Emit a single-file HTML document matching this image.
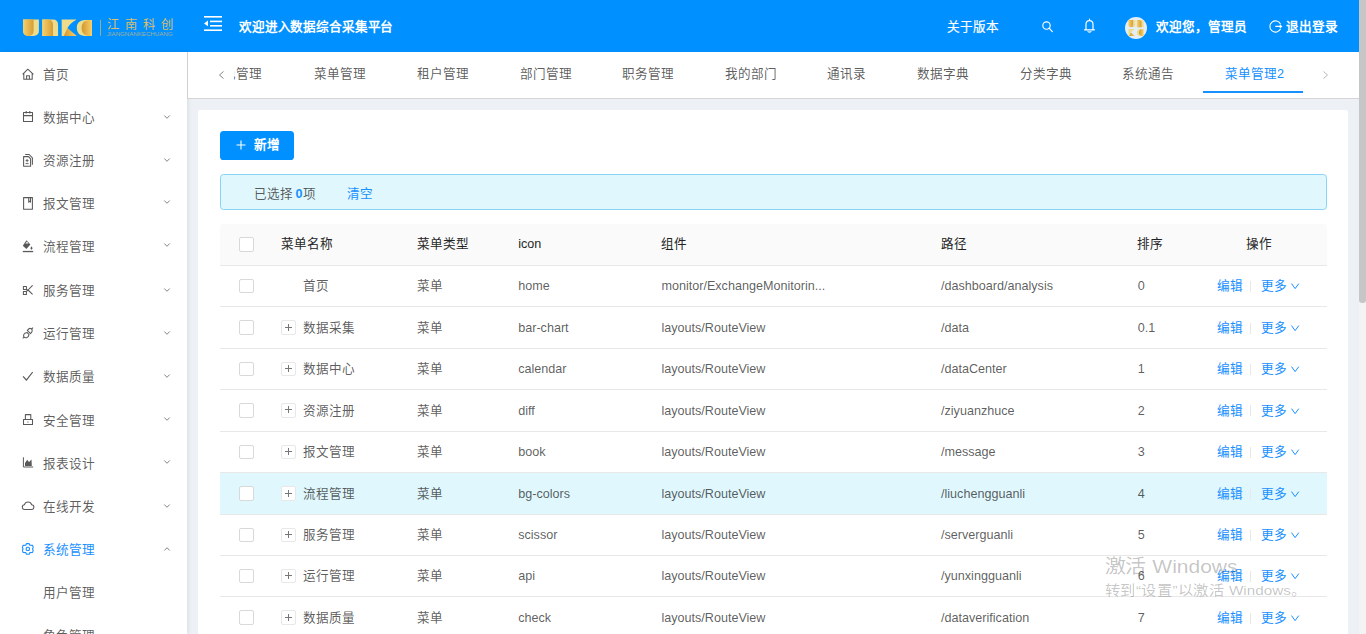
<!DOCTYPE html>
<html lang="zh-CN"><head><meta charset="utf-8">
<style>
*{box-sizing:border-box;margin:0;padding:0}
html,body{width:1366px;height:634px;overflow:hidden}
body{font-family:"Liberation Sans",sans-serif;font-size:12.6px;color:rgba(0,0,0,.65);background:#edf0f4;position:relative}
.abs{position:absolute}
#sb{left:1359px;top:0;width:7px;height:634px;background:#f3f3f3}
#thumb{left:0;top:0;width:7px;height:303px;background:#c6c6c6;border-radius:0 0 3px 3px}
#hdr{left:0;top:0;width:1359px;height:52px;background:#0090ff;color:#fff}
#side{left:0;top:52px;width:187px;height:582px;background:#fff;box-shadow:1px 0 4px rgba(0,21,41,.09)}
#tabs{left:187px;top:52px;width:1172px;height:47px;background:#fff;border-left:1px solid #cfcfcf;border-bottom:1px solid #d4d4d4}
#card{left:198px;top:110px;width:1150px;height:530px;background:#fff;border-radius:2px}
.t{position:absolute;white-space:nowrap;line-height:1}
.hw{color:#fff;font-size:12.6px}
svg{position:absolute;overflow:visible}
</style></head>
<body>
<div id="hdr" class="abs">
  <!-- logo -->
  <svg style="left:0;top:0" width="190" height="52" viewBox="0 0 190 52">
    <defs>
      <linearGradient id="gd" x1="0" x2="1" y1="0" y2="0">
        <stop offset="0" stop-color="#f6d16c"/><stop offset="1" stop-color="#d69c36"/>
      </linearGradient>
      <linearGradient id="gr" x1="0" x2="1" y1="0" y2="0">
        <stop offset="0" stop-color="#d3962e"/><stop offset="1" stop-color="#f7d06a"/>
      </linearGradient>
    </defs>
    <g id="lU">
    <path d="M23.1,19.5 H38.9 V30.8 Q38.9,35.9 33.5,35.9 H28.5 Q23.1,35.9 23.1,30.8 Z" fill="#ecdc8c"/>
    <path d="M23.1,19.5 H33.6 V30.8 Q33.6,35.9 28.3,35.9 Q23.1,35.9 23.1,30.8 Z" fill="url(#gd)"/>
    </g><g id="ln">
    <path d="M42.3,35.9 V19.5 H53 Q58.1,19.5 58.1,25 V35.9 Z" fill="#ecdc8c"/>
    <path d="M42.3,35.9 V19.5 H48 Q53,19.5 53,25 V35.9 Z" fill="url(#gd)"/>
    </g><g id="lK">
    <path d="M61.7,19.5 H76.8 Q70.5,22.5 67.4,28 L68.5,29 L65.5,35.9 H61.7 Z" fill="#ecdc8c"/>
    <path d="M63.8,35.9 L67.4,28 L76.8,35.9 Z" fill="url(#gr)"/>
    </g><g id="lC">
    <path d="M92,20 H84.5 Q76.8,20.5 76.8,27.9 Q76.8,35.4 84.5,35.9 H92 Z" fill="#ecdc8c"/>
    <path d="M92,20.2 H88 Q81.6,21 81.6,28 Q81.6,35 88,35.9 H92 Z" fill="url(#gr)"/>
    </g>
    <rect x="100" y="19.7" width="0.9" height="16" fill="#d9b760" opacity=".8"/>
  </svg>
  <svg style="left:0;top:0" width="190" height="52" viewBox="0 0 190 52">
    <text x="106.5" y="29.4" font-size="12.3" textLength="66" lengthAdjust="spacing" fill="#d9bf70" font-family="Liberation Sans, sans-serif">江南科创</text>
    <text x="106.8" y="36.2" font-size="4.9" textLength="65.6" lengthAdjust="spacingAndGlyphs" fill="#cdb877" opacity=".8" font-family="Liberation Sans, sans-serif">JIANGNANKECHUANG</text>
  </svg>
  <!-- menu fold icon -->
  <svg style="left:204px;top:15.5px" width="18" height="15" viewBox="0 0 18 15">
    <rect x="0" y="0" width="18" height="1.6" fill="#fff"/>
    <rect x="6" y="4.6" width="12" height="1.6" fill="#fff"/>
    <rect x="6" y="9" width="12" height="1.6" fill="#fff"/>
    <rect x="0" y="13.4" width="18" height="1.6" fill="#fff"/>
    <path d="M0,7.4 L4,4.6 V10.2 Z" fill="#fff"/>
  </svg>
  <div class="t hw" style="left:239px;top:20.5px;font-size:12.6px;font-weight:600;letter-spacing:-0.15px">欢迎进入数据综合采集平台</div>
  <div class="t hw" style="left:947px;top:20.5px;-webkit-text-stroke:0.2px #fff">关于版本</div>
  <!-- search -->
  <svg style="left:1041.5px;top:20.5px" width="12" height="12" viewBox="0 0 12 12">
    <circle cx="4.5" cy="4.5" r="3.7" fill="none" stroke="#fff" stroke-width="1.15"/>
    <path d="M7.2,7.2 L10.3,10.6" stroke="#fff" stroke-width="1.2" stroke-linecap="round"/>
  </svg>
  <!-- bell -->
  <svg style="left:1083.5px;top:18px" width="11" height="15" viewBox="0 0 11 15">
    <path d="M5.5,1.2 V2.2 M2,11.5 V6.5 Q2,2.6 5.5,2.6 Q9,2.6 9,6.5 V11.5 M0.5,11.8 H10.5 M4,13.6 Q5.5,14.8 7,13.6" fill="none" stroke="#fff" stroke-width="1.2" stroke-linecap="round"/>
  </svg>
  <!-- avatar -->
  <div class="abs" style="left:1125px;top:17px;width:21.8px;height:21.8px;border-radius:50%;background:#e3eef8;overflow:hidden">
    <svg style="left:0;top:0" width="22" height="22" viewBox="0 0 22 22">
      <use href="#lU" transform="translate(3.5,3.1) scale(.43) translate(-23.1,-19.5)"/>
      <use href="#ln" transform="translate(11.9,3.1) scale(.43) translate(-42.3,-19.5)"/>
      <use href="#lK" transform="translate(3.5,11.9) scale(.43) translate(-61.7,-19.5)"/>
      <use href="#lC" transform="translate(11.9,11.9) scale(.43) translate(-76.8,-19.5)"/>
    </svg>
  </div>
  <div class="t hw" style="left:1155.5px;top:20.5px;font-weight:600">欢迎您，管理员</div>
  <!-- logout -->
  <svg style="left:1269px;top:20px" width="13" height="13" viewBox="0 0 13 13">
    <path d="M11.6,4.2 A5.6,5.6 0 1 0 11.6,8.8" fill="none" stroke="#fff" stroke-width="1.1"/>
    <path d="M6.3,6.4 H12.6 M10.8,4.9 L12.6,6.4 L10.8,7.9" fill="none" stroke="#fff" stroke-width="1.1"/>
  </svg>
  <div class="t hw" style="left:1285.5px;top:20.5px;font-weight:600">退出登录</div>
</div>

<div id="side" class="abs"></div>
<svg style="left:0;top:0" width="187" height="634" viewBox="0 0 187 634">
<g fill="none" stroke="#595959" stroke-width="1.05" stroke-linejoin="round">
<path d="M22.6,74.4 L27.8,69.2 L33.4,74.4 M23.8,73.4 V79.2 H32.2 V73.4 M26.6,79.2 V75.8 H29.4 V79.2"/>
<path d="M23.5,112.5 H32.5 V121.5 H23.5 Z M23.5,115.6 H32.5 M26.2,111 V113.6 M29.8,111 V113.6"/>
<path d="M23.6,156.6 H28.6 L30.6,158.8 V166.3 H23.6 Z M25.2,154.5 H29.2 L32.4,157.8 V164.8"/>
<path d="M25.6,160.6 H28.6 M27.1,159 V162.2 M25.6,163.6 H28.6" stroke-width="0.9"/>
<path d="M23.6,197.6 H32.4 V209.3 H23.6 Z M28.7,197.6 V202.2 L29.6,201.2 L30.5,202.2 V197.6"/>
<path d="M23.5,286.5 m-0.1,0 h3 v3 h-3 Z M23.4,291.5 h3 v3 h-3 Z M26.4,289.5 L28,290 L32.6,285.3 M26.4,291.4 L28,290 L32.6,294.4"/>
<path d="M27.3,330.4 L30.5,333.6 Q32.6,331.6 32.2,329.9 Q31.2,327.9 29.3,328.5 Z M31.8,328.9 L33,327.7"/>
<path d="M27.2,332.6 L29,334.6 Q28.6,337.2 26.6,337.7 Q24.6,338 23.7,336.6 Q23,334.8 24.8,333.3 Z M23.9,337.2 L22.8,338.3"/>
<path d="M23.1,376.3 L26.4,380.2 L32.7,372" stroke-width="1.2"/>
<path d="M23.5,419.5 H32.5 V424.5 H23.5 Z M25.4,419.5 V414.6 H30.8 V419.5 M27.9,421.4 V422.6"/>
<path d="M23.4,457.3 V467 H33.2" stroke-width="1"/>
<path d="M24.6,509.5 Q22.3,509.5 22.3,507.2 Q22.3,505 24.4,504.8 Q25.3,502 28,502 Q30.9,502 31.7,504.8 Q33.9,505 33.9,507.2 Q33.9,509.5 31.5,509.5 Z"/>
</g>
<path d="M26.5,240.2 L30.4,244.6 L26.4,248.9 L22.8,245.8 Z" fill="#595959"/>
<path d="M25.4,243.6 L27,241.6 L28.5,243.6 Z" fill="#fff"/>
<path d="M31.5,246.2 Q32.8,248 32.4,249 Q31.5,250 30.6,249 Q30.2,248 31.5,246.2 Z" fill="#595959"/>
<rect x="22.8" y="250.9" width="10.4" height="1.3" fill="#595959"/>
<path d="M25,466 V463 L27.2,459.8 L29,462 L31.5,459.4 L31.8,466 Z" fill="#595959"/>
<g fill="none" stroke="#1890ff" stroke-width="1.1" stroke-linejoin="round">
<path d="M26.4,543.6 H29.2 L29.8,545.2 L32.6,545.4 L33.2,547.6 L32.5,548.9 L33.2,550.2 L32.6,552.4 L29.8,552.6 L29.2,554.2 H26.4 L25.8,552.6 L23,552.4 L22.4,550.2 L23.1,548.9 L22.4,547.6 L23,545.4 L25.8,545.2 Z"/>
<rect x="26.2" y="547.2" width="3.2" height="3.3" rx="1"/>
</g>
</svg>
<div class="t" style="left:43.4px;top:69.0px;color:rgba(0,0,0,.65)">首页</div>
<div class="t" style="left:43.4px;top:112.2px;color:rgba(0,0,0,.65)">数据中心</div>
<svg style="left:163.7px;top:114.7px" width="6" height="4" viewBox="0 0 6 4"><path d="M0.3,0.5 L3,3.3 L5.7,0.5" fill="none" stroke="#777" stroke-width="0.9"/></svg>
<div class="t" style="left:43.4px;top:155.4px;color:rgba(0,0,0,.65)">资源注册</div>
<svg style="left:163.7px;top:157.9px" width="6" height="4" viewBox="0 0 6 4"><path d="M0.3,0.5 L3,3.3 L5.7,0.5" fill="none" stroke="#777" stroke-width="0.9"/></svg>
<div class="t" style="left:43.4px;top:197.6px;color:rgba(0,0,0,.65)">报文管理</div>
<svg style="left:163.7px;top:200.1px" width="6" height="4" viewBox="0 0 6 4"><path d="M0.3,0.5 L3,3.3 L5.7,0.5" fill="none" stroke="#777" stroke-width="0.9"/></svg>
<div class="t" style="left:43.4px;top:240.8px;color:rgba(0,0,0,.65)">流程管理</div>
<svg style="left:163.7px;top:243.3px" width="6" height="4" viewBox="0 0 6 4"><path d="M0.3,0.5 L3,3.3 L5.7,0.5" fill="none" stroke="#777" stroke-width="0.9"/></svg>
<div class="t" style="left:43.4px;top:285.0px;color:rgba(0,0,0,.65)">服务管理</div>
<svg style="left:163.7px;top:287.5px" width="6" height="4" viewBox="0 0 6 4"><path d="M0.3,0.5 L3,3.3 L5.7,0.5" fill="none" stroke="#777" stroke-width="0.9"/></svg>
<div class="t" style="left:43.4px;top:328.2px;color:rgba(0,0,0,.65)">运行管理</div>
<svg style="left:163.7px;top:330.7px" width="6" height="4" viewBox="0 0 6 4"><path d="M0.3,0.5 L3,3.3 L5.7,0.5" fill="none" stroke="#777" stroke-width="0.9"/></svg>
<div class="t" style="left:43.4px;top:371.4px;color:rgba(0,0,0,.65)">数据质量</div>
<svg style="left:163.7px;top:373.9px" width="6" height="4" viewBox="0 0 6 4"><path d="M0.3,0.5 L3,3.3 L5.7,0.5" fill="none" stroke="#777" stroke-width="0.9"/></svg>
<div class="t" style="left:43.4px;top:414.6px;color:rgba(0,0,0,.65)">安全管理</div>
<svg style="left:163.7px;top:417.1px" width="6" height="4" viewBox="0 0 6 4"><path d="M0.3,0.5 L3,3.3 L5.7,0.5" fill="none" stroke="#777" stroke-width="0.9"/></svg>
<div class="t" style="left:43.4px;top:457.8px;color:rgba(0,0,0,.65)">报表设计</div>
<svg style="left:163.7px;top:460.3px" width="6" height="4" viewBox="0 0 6 4"><path d="M0.3,0.5 L3,3.3 L5.7,0.5" fill="none" stroke="#777" stroke-width="0.9"/></svg>
<div class="t" style="left:43.4px;top:501.0px;color:rgba(0,0,0,.65)">在线开发</div>
<svg style="left:163.7px;top:503.5px" width="6" height="4" viewBox="0 0 6 4"><path d="M0.3,0.5 L3,3.3 L5.7,0.5" fill="none" stroke="#777" stroke-width="0.9"/></svg>
<div class="t" style="left:43.4px;top:544.2px;color:#1890ff">系统管理</div>
<svg style="left:163.7px;top:546.7px" width="6" height="4" viewBox="0 0 6 4"><path d="M0.3,3.5 L3,0.7 L5.7,3.5" fill="none" stroke="#777" stroke-width="0.9"/></svg>
<div class="t" style="left:43.4px;top:587.4px">用户管理</div>
<div class="t" style="left:43.4px;top:629.6px">角色管理</div>
<div id="tabs" class="abs"></div>
<svg style="left:218px;top:70.5px" width="7" height="8" viewBox="0 0 7 8"><path d="M5.5,0.5 L1.5,4 L5.5,7.5" fill="none" stroke="#888" stroke-width="1"/></svg>
<div class="abs" style="left:234px;top:52px;width:960px;height:46px;overflow:hidden">
<div class="t" style="left:-10.8px;top:15.5px">色管理</div>
</div>
<div class="t" style="left:314px;top:67.5px">菜单管理</div>
<div class="t" style="left:417px;top:67.5px">租户管理</div>
<div class="t" style="left:520px;top:67.5px">部门管理</div>
<div class="t" style="left:622px;top:67.5px">职务管理</div>
<div class="t" style="left:725px;top:67.5px">我的部门</div>
<div class="t" style="left:827px;top:67.5px">通讯录</div>
<div class="t" style="left:917px;top:67.5px">数据字典</div>
<div class="t" style="left:1020px;top:67.5px">分类字典</div>
<div class="t" style="left:1122px;top:67.5px">系统通告</div>
<div class="t" style="left:1225px;top:67.5px;color:#1890ff">菜单管理2</div>
<div class="abs" style="left:1203px;top:90.5px;width:100px;height:2px;background:#1890ff"></div>
<svg style="left:1322px;top:70.5px" width="7" height="8" viewBox="0 0 7 8"><path d="M1.5,0.5 L5.5,4 L1.5,7.5" fill="none" stroke="#bbb" stroke-width="1"/></svg>
<div id="card" class="abs"></div>
<div class="abs" style="left:220px;top:131px;width:74px;height:29px;background:#0090ff;border-radius:3.6px"></div>
<svg style="left:236px;top:140px" width="10" height="10" viewBox="0 0 10 10"><path d="M0.5,5 H9.5 M5,0.5 V9.5" stroke="#fff" stroke-width="1.1"/></svg>
<div class="t" style="left:253.6px;top:139px;color:#fff;font-weight:600">新增</div>
<div class="abs" style="left:220px;top:174px;width:1107px;height:36px;background:#e0f7fd;border:1px solid #88d4f6;border-radius:3.6px"></div>
<div class="t" style="left:254.4px;top:187.5px">已选择 <span style="color:#1890ff;margin-left:-1.4px;font-weight:600">0</span>项</div>
<div class="t" style="left:347px;top:187.5px;color:#1890ff">清空</div>
<div class="abs" style="left:220px;top:224px;width:1107px;height:42px;background:#fafafa;border-bottom:1px solid #e8e8e8;border-radius:3.6px 3.6px 0 0"></div>
<div class="abs" style="left:239.4px;top:237.2px;width:14.4px;height:14.4px;border:1px solid #d9d9d9;border-radius:2px;background:#fff"></div>
<div class="t" style="left:280.8px;top:238.2px;color:rgba(0,0,0,.85);font-weight:500;-webkit-text-stroke:0.15px rgba(0,0,0,.5)">菜单名称</div>
<div class="t" style="left:416.5px;top:238.2px;color:rgba(0,0,0,.85);font-weight:500;-webkit-text-stroke:0.15px rgba(0,0,0,.5)">菜单类型</div>
<div class="t" style="left:518.2px;top:238.2px;color:rgba(0,0,0,.85);font-weight:500;-webkit-text-stroke:0.15px rgba(0,0,0,.5)">icon</div>
<div class="t" style="left:661.4px;top:238.2px;color:rgba(0,0,0,.85);font-weight:500;-webkit-text-stroke:0.15px rgba(0,0,0,.5)">组件</div>
<div class="t" style="left:941px;top:238.2px;color:rgba(0,0,0,.85);font-weight:500;-webkit-text-stroke:0.15px rgba(0,0,0,.5)">路径</div>
<div class="t" style="left:1137.4px;top:238.2px;color:rgba(0,0,0,.85);font-weight:500;-webkit-text-stroke:0.15px rgba(0,0,0,.5)">排序</div>
<div class="t" style="left:1246.4px;top:238.2px;color:rgba(0,0,0,.85);font-weight:500;-webkit-text-stroke:0.15px rgba(0,0,0,.5)">操作</div>
<div class="abs" style="left:220px;top:266px;width:1107px;height:40px;background:#fff"></div>
<div class="abs" style="left:220px;top:306px;width:1107px;height:1px;background:#e8e8e8"></div>
<div class="abs" style="left:239.4px;top:278.8px;width:14.4px;height:14.4px;border:1px solid #d9d9d9;border-radius:2px;background:#fff"></div>
<div class="t" style="left:303px;top:280.4px">首页</div>
<div class="t" style="left:416.5px;top:280.4px">菜单</div>
<div class="t" style="left:518.2px;top:280.4px">home</div>
<div class="t" style="left:661.4px;top:280.4px">monitor/ExchangeMonitorin...</div>
<div class="t" style="left:941px;top:280.4px">/dashboard/analysis</div>
<div class="t" style="left:1137.7px;top:280.4px">0</div>
<div class="t" style="left:1217.2px;top:280.4px;color:#1890ff">编辑</div>
<div class="abs" style="left:1250px;top:281px;width:1px;height:11px;background:#e8e8e8"></div>
<div class="t" style="left:1260.5px;top:280.4px;color:#1890ff">更多</div>
<svg style="left:1291.3px;top:283.4px" width="9" height="7" viewBox="0 0 9 7"><path d="M0.5,0.6 L4.1,5.6 L7.8,0.6" fill="none" stroke="#1890ff" stroke-width="1"/></svg>
<div class="abs" style="left:220px;top:307px;width:1107px;height:41px;background:#fff"></div>
<div class="abs" style="left:220px;top:348px;width:1107px;height:1px;background:#e8e8e8"></div>
<div class="abs" style="left:239.4px;top:320.3px;width:14.4px;height:14.4px;border:1px solid #d9d9d9;border-radius:2px;background:#fff"></div>
<div class="abs" style="left:281.2px;top:320.3px;width:14.4px;height:14.4px;border:1px solid #e8e8e8;border-radius:2px;background:#fff"></div>
<div class="abs" style="left:285px;top:327px;width:7px;height:1px;background:#777"></div>
<div class="abs" style="left:288px;top:324px;width:1px;height:7px;background:#777"></div>
<div class="t" style="left:303px;top:321.9px">数据采集</div>
<div class="t" style="left:416.5px;top:321.9px">菜单</div>
<div class="t" style="left:518.2px;top:321.9px">bar-chart</div>
<div class="t" style="left:661.4px;top:321.9px">layouts/RouteView</div>
<div class="t" style="left:941px;top:321.9px">/data</div>
<div class="t" style="left:1137.7px;top:321.9px">0.1</div>
<div class="t" style="left:1217.2px;top:321.9px;color:#1890ff">编辑</div>
<div class="abs" style="left:1250px;top:323px;width:1px;height:11px;background:#e8e8e8"></div>
<div class="t" style="left:1260.5px;top:321.9px;color:#1890ff">更多</div>
<svg style="left:1291.3px;top:324.9px" width="9" height="7" viewBox="0 0 9 7"><path d="M0.5,0.6 L4.1,5.6 L7.8,0.6" fill="none" stroke="#1890ff" stroke-width="1"/></svg>
<div class="abs" style="left:220px;top:349px;width:1107px;height:40px;background:#fff"></div>
<div class="abs" style="left:220px;top:389px;width:1107px;height:1px;background:#e8e8e8"></div>
<div class="abs" style="left:239.4px;top:361.8px;width:14.4px;height:14.4px;border:1px solid #d9d9d9;border-radius:2px;background:#fff"></div>
<div class="abs" style="left:281.2px;top:361.8px;width:14.4px;height:14.4px;border:1px solid #e8e8e8;border-radius:2px;background:#fff"></div>
<div class="abs" style="left:285px;top:368px;width:7px;height:1px;background:#777"></div>
<div class="abs" style="left:288px;top:365px;width:1px;height:7px;background:#777"></div>
<div class="t" style="left:303px;top:363.4px">数据中心</div>
<div class="t" style="left:416.5px;top:363.4px">菜单</div>
<div class="t" style="left:518.2px;top:363.4px">calendar</div>
<div class="t" style="left:661.4px;top:363.4px">layouts/RouteView</div>
<div class="t" style="left:941px;top:363.4px">/dataCenter</div>
<div class="t" style="left:1137.7px;top:363.4px">1</div>
<div class="t" style="left:1217.2px;top:363.4px;color:#1890ff">编辑</div>
<div class="abs" style="left:1250px;top:364px;width:1px;height:11px;background:#e8e8e8"></div>
<div class="t" style="left:1260.5px;top:363.4px;color:#1890ff">更多</div>
<svg style="left:1291.3px;top:366.4px" width="9" height="7" viewBox="0 0 9 7"><path d="M0.5,0.6 L4.1,5.6 L7.8,0.6" fill="none" stroke="#1890ff" stroke-width="1"/></svg>
<div class="abs" style="left:220px;top:390px;width:1107px;height:41px;background:#fff"></div>
<div class="abs" style="left:220px;top:431px;width:1107px;height:1px;background:#e8e8e8"></div>
<div class="abs" style="left:239.4px;top:403.3px;width:14.4px;height:14.4px;border:1px solid #d9d9d9;border-radius:2px;background:#fff"></div>
<div class="abs" style="left:281.2px;top:403.3px;width:14.4px;height:14.4px;border:1px solid #e8e8e8;border-radius:2px;background:#fff"></div>
<div class="abs" style="left:285px;top:409px;width:7px;height:1px;background:#777"></div>
<div class="abs" style="left:288px;top:406px;width:1px;height:7px;background:#777"></div>
<div class="t" style="left:303px;top:404.9px">资源注册</div>
<div class="t" style="left:416.5px;top:404.9px">菜单</div>
<div class="t" style="left:518.2px;top:404.9px">diff</div>
<div class="t" style="left:661.4px;top:404.9px">layouts/RouteView</div>
<div class="t" style="left:941px;top:404.9px">/ziyuanzhuce</div>
<div class="t" style="left:1137.7px;top:404.9px">2</div>
<div class="t" style="left:1217.2px;top:404.9px;color:#1890ff">编辑</div>
<div class="abs" style="left:1250px;top:405px;width:1px;height:11px;background:#e8e8e8"></div>
<div class="t" style="left:1260.5px;top:404.9px;color:#1890ff">更多</div>
<svg style="left:1291.3px;top:407.9px" width="9" height="7" viewBox="0 0 9 7"><path d="M0.5,0.6 L4.1,5.6 L7.8,0.6" fill="none" stroke="#1890ff" stroke-width="1"/></svg>
<div class="abs" style="left:220px;top:432px;width:1107px;height:40px;background:#fff"></div>
<div class="abs" style="left:220px;top:472px;width:1107px;height:1px;background:#e8e8e8"></div>
<div class="abs" style="left:239.4px;top:444.8px;width:14.4px;height:14.4px;border:1px solid #d9d9d9;border-radius:2px;background:#fff"></div>
<div class="abs" style="left:281.2px;top:444.8px;width:14.4px;height:14.4px;border:1px solid #e8e8e8;border-radius:2px;background:#fff"></div>
<div class="abs" style="left:285px;top:451px;width:7px;height:1px;background:#777"></div>
<div class="abs" style="left:288px;top:448px;width:1px;height:7px;background:#777"></div>
<div class="t" style="left:303px;top:446.4px">报文管理</div>
<div class="t" style="left:416.5px;top:446.4px">菜单</div>
<div class="t" style="left:518.2px;top:446.4px">book</div>
<div class="t" style="left:661.4px;top:446.4px">layouts/RouteView</div>
<div class="t" style="left:941px;top:446.4px">/message</div>
<div class="t" style="left:1137.7px;top:446.4px">3</div>
<div class="t" style="left:1217.2px;top:446.4px;color:#1890ff">编辑</div>
<div class="abs" style="left:1250px;top:447px;width:1px;height:11px;background:#e8e8e8"></div>
<div class="t" style="left:1260.5px;top:446.4px;color:#1890ff">更多</div>
<svg style="left:1291.3px;top:449.4px" width="9" height="7" viewBox="0 0 9 7"><path d="M0.5,0.6 L4.1,5.6 L7.8,0.6" fill="none" stroke="#1890ff" stroke-width="1"/></svg>
<div class="abs" style="left:220px;top:473px;width:1107px;height:41px;background:#e0f7fd"></div>
<div class="abs" style="left:220px;top:514px;width:1107px;height:1px;background:#e8e8e8"></div>
<div class="abs" style="left:239.4px;top:486.3px;width:14.4px;height:14.4px;border:1px solid #d9d9d9;border-radius:2px;background:#fff"></div>
<div class="abs" style="left:281.2px;top:486.3px;width:14.4px;height:14.4px;border:1px solid #e8e8e8;border-radius:2px;background:#fff"></div>
<div class="abs" style="left:285px;top:493px;width:7px;height:1px;background:#777"></div>
<div class="abs" style="left:288px;top:490px;width:1px;height:7px;background:#777"></div>
<div class="t" style="left:303px;top:487.9px">流程管理</div>
<div class="t" style="left:416.5px;top:487.9px">菜单</div>
<div class="t" style="left:518.2px;top:487.9px">bg-colors</div>
<div class="t" style="left:661.4px;top:487.9px">layouts/RouteView</div>
<div class="t" style="left:941px;top:487.9px">/liuchengguanli</div>
<div class="t" style="left:1137.7px;top:487.9px">4</div>
<div class="t" style="left:1217.2px;top:487.9px;color:#1890ff">编辑</div>
<div class="abs" style="left:1250px;top:489px;width:1px;height:11px;background:#e8e8e8"></div>
<div class="t" style="left:1260.5px;top:487.9px;color:#1890ff">更多</div>
<svg style="left:1291.3px;top:490.9px" width="9" height="7" viewBox="0 0 9 7"><path d="M0.5,0.6 L4.1,5.6 L7.8,0.6" fill="none" stroke="#1890ff" stroke-width="1"/></svg>
<div class="abs" style="left:220px;top:515px;width:1107px;height:40px;background:#fff"></div>
<div class="abs" style="left:220px;top:555px;width:1107px;height:1px;background:#e8e8e8"></div>
<div class="abs" style="left:239.4px;top:527.8px;width:14.4px;height:14.4px;border:1px solid #d9d9d9;border-radius:2px;background:#fff"></div>
<div class="abs" style="left:281.2px;top:527.8px;width:14.4px;height:14.4px;border:1px solid #e8e8e8;border-radius:2px;background:#fff"></div>
<div class="abs" style="left:285px;top:534px;width:7px;height:1px;background:#777"></div>
<div class="abs" style="left:288px;top:531px;width:1px;height:7px;background:#777"></div>
<div class="t" style="left:303px;top:529.4px">服务管理</div>
<div class="t" style="left:416.5px;top:529.4px">菜单</div>
<div class="t" style="left:518.2px;top:529.4px">scissor</div>
<div class="t" style="left:661.4px;top:529.4px">layouts/RouteView</div>
<div class="t" style="left:941px;top:529.4px">/serverguanli</div>
<div class="t" style="left:1137.7px;top:529.4px">5</div>
<div class="t" style="left:1217.2px;top:529.4px;color:#1890ff">编辑</div>
<div class="abs" style="left:1250px;top:530px;width:1px;height:11px;background:#e8e8e8"></div>
<div class="t" style="left:1260.5px;top:529.4px;color:#1890ff">更多</div>
<svg style="left:1291.3px;top:532.4px" width="9" height="7" viewBox="0 0 9 7"><path d="M0.5,0.6 L4.1,5.6 L7.8,0.6" fill="none" stroke="#1890ff" stroke-width="1"/></svg>
<div class="abs" style="left:220px;top:556px;width:1107px;height:40px;background:#fff"></div>
<div class="abs" style="left:220px;top:596px;width:1107px;height:1px;background:#e8e8e8"></div>
<div class="abs" style="left:239.4px;top:568.8px;width:14.4px;height:14.4px;border:1px solid #d9d9d9;border-radius:2px;background:#fff"></div>
<div class="abs" style="left:281.2px;top:568.8px;width:14.4px;height:14.4px;border:1px solid #e8e8e8;border-radius:2px;background:#fff"></div>
<div class="abs" style="left:285px;top:575px;width:7px;height:1px;background:#777"></div>
<div class="abs" style="left:288px;top:572px;width:1px;height:7px;background:#777"></div>
<div class="t" style="left:303px;top:570.4px">运行管理</div>
<div class="t" style="left:416.5px;top:570.4px">菜单</div>
<div class="t" style="left:518.2px;top:570.4px">api</div>
<div class="t" style="left:661.4px;top:570.4px">layouts/RouteView</div>
<div class="t" style="left:941px;top:570.4px">/yunxingguanli</div>
<div class="t" style="left:1137.7px;top:570.4px">6</div>
<div class="t" style="left:1217.2px;top:570.4px;color:#1890ff">编辑</div>
<div class="abs" style="left:1250px;top:571px;width:1px;height:11px;background:#e8e8e8"></div>
<div class="t" style="left:1260.5px;top:570.4px;color:#1890ff">更多</div>
<svg style="left:1291.3px;top:573.4px" width="9" height="7" viewBox="0 0 9 7"><path d="M0.5,0.6 L4.1,5.6 L7.8,0.6" fill="none" stroke="#1890ff" stroke-width="1"/></svg>
<div class="abs" style="left:220px;top:597px;width:1107px;height:41px;background:#fff"></div>
<div class="abs" style="left:220px;top:638px;width:1107px;height:1px;background:#e8e8e8"></div>
<div class="abs" style="left:239.4px;top:610.3px;width:14.4px;height:14.4px;border:1px solid #d9d9d9;border-radius:2px;background:#fff"></div>
<div class="abs" style="left:281.2px;top:610.3px;width:14.4px;height:14.4px;border:1px solid #e8e8e8;border-radius:2px;background:#fff"></div>
<div class="abs" style="left:285px;top:617px;width:7px;height:1px;background:#777"></div>
<div class="abs" style="left:288px;top:614px;width:1px;height:7px;background:#777"></div>
<div class="t" style="left:303px;top:611.9px">数据质量</div>
<div class="t" style="left:416.5px;top:611.9px">菜单</div>
<div class="t" style="left:518.2px;top:611.9px">check</div>
<div class="t" style="left:661.4px;top:611.9px">layouts/RouteView</div>
<div class="t" style="left:941px;top:611.9px">/dataverification</div>
<div class="t" style="left:1137.7px;top:611.9px">7</div>
<div class="t" style="left:1217.2px;top:611.9px;color:#1890ff">编辑</div>
<div class="abs" style="left:1250px;top:613px;width:1px;height:11px;background:#e8e8e8"></div>
<div class="t" style="left:1260.5px;top:611.9px;color:#1890ff">更多</div>
<svg style="left:1291.3px;top:614.9px" width="9" height="7" viewBox="0 0 9 7"><path d="M0.5,0.6 L4.1,5.6 L7.8,0.6" fill="none" stroke="#1890ff" stroke-width="1"/></svg>
<svg style="left:0;top:0" width="1366" height="634"><g fill="rgba(0,0,0,.24)" font-family="Liberation Sans, sans-serif"><text x="1104.5" y="572.5" font-size="19" textLength="133" lengthAdjust="spacingAndGlyphs">激活 Windows</text><text x="1104.5" y="594.5" font-size="13.6" textLength="202" lengthAdjust="spacingAndGlyphs">转到“设置”以激活 Windows。</text></g></svg>
<div id="sb" class="abs"><div id="thumb" class="abs"></div></div>
</body></html>
